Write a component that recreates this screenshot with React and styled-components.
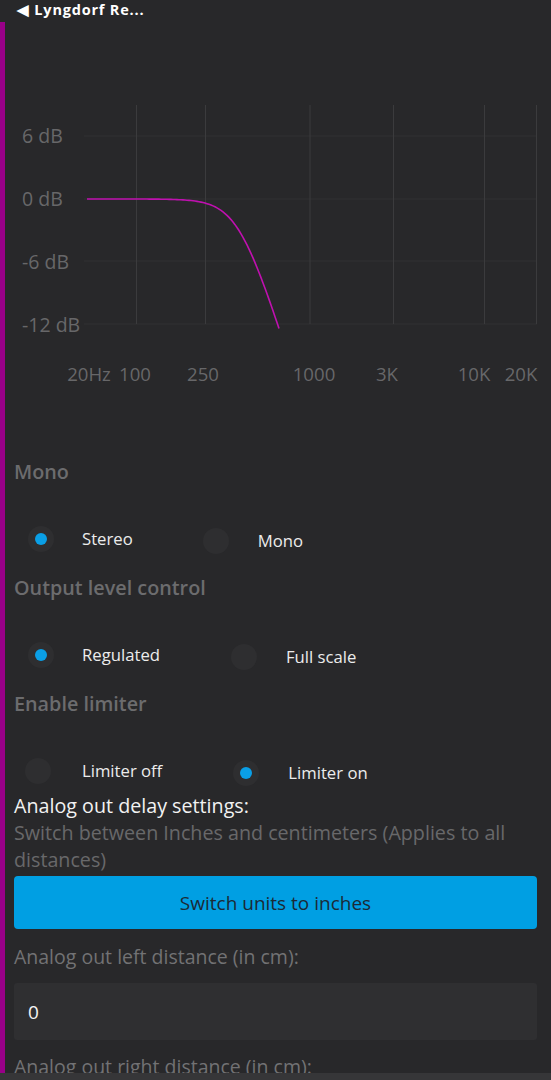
import React from "react";
import styled, { createGlobalStyle } from "styled-components";

const Global = createGlobalStyle`
  html, body { margin: 0; padding: 0; background: #28282a; }
  body { font-family: "Open Sans", "Noto Sans", sans-serif; color: #e6e6e6; overflow: hidden; }
  * { box-sizing: border-box; }
`;

const Page = styled.div`
  width: 551px;
  height: 1080px;
  display: flex;
  flex-direction: column;
  overflow: hidden;
  background: #28282a;
`;

const TopBar = styled.div`
  height: 22px;
  flex: 0 0 22px;
  padding: 0 0 0 17px;
  font-size: 14.5px;
  line-height: 19px;
  letter-spacing: 0.8px;
  font-weight: 700;
  color: #ffffff;
  white-space: nowrap;
`;

const Body = styled.div`
  flex: 1;
  display: flex;
  min-height: 0;
`;

const Accent = styled.div`
  width: 5px;
  flex: 0 0 5px;
  background: #990088;
`;

const Main = styled.div`
  flex: 1;
  display: flex;
  flex-direction: column;
  min-width: 0;
`;

const ChartSvg = styled.svg`
  display: block;
  width: 546px;
  height: 410px;
  flex: 0 0 auto;
`;

const Content = styled.div`
  padding: 0 14px 0 9px;
  display: flex;
  flex-direction: column;
`;

const Heading = styled.div`
  font-size: 19.8px;
  line-height: 27px;
  font-weight: 600;
  color: #6c6c6e;
  margin-top: ${(p) => p.$top || 0}px;
  white-space: nowrap;
`;

const RadioRow = styled.div`
  display: flex;
  align-items: center;
  height: 42px;
  margin-top: 34px;
  padding-left: ${(p) => p.$indent || 14}px;
`;

const RadioItem = styled.label`
  display: flex;
  align-items: center;
  margin-right: ${(p) => p.$gap || 71}px;
  transform: translateY(${(p) => p.$shift || 0}px);
`;

const RadioCircle = styled.span`
  width: 26px;
  height: 26px;
  border-radius: 50%;
  background: #2e2e30;
  display: flex;
  align-items: center;
  justify-content: center;
  margin-right: ${(p) => p.$space || 28}px;
  &::after {
    content: "";
    width: 12px;
    height: 12px;
    border-radius: 50%;
    background: ${(p) => (p.$on ? "#0a9fe6" : "transparent")};
  }
`;

const RadioLabel = styled.span`
  font-size: 16.7px;
  line-height: 22px;
  color: #ececec;
  white-space: nowrap;
`;

const Title = styled.div`
  font-size: 19.7px;
  line-height: 27px;
  color: #f2f2f2;
  margin-top: -1px;
`;

const Desc = styled.div`
  font-size: 19.7px;
  line-height: 27px;
  color: #68686a;
`;

const Button = styled.button`
  margin-top: 3px;
  height: 53px;
  width: 100%;
  border: none;
  border-radius: 4px;
  background: #009fe3;
  color: #1c2a35;
  font-family: "Open Sans", "Noto Sans", sans-serif;
  font-size: 19px;
  font-weight: 500;
  cursor: pointer;
`;

const FieldLabel = styled.div`
  font-size: 19.5px;
  line-height: 27px;
  color: #727274;
  margin-top: ${(p) => p.$top || 0}px;
  white-space: nowrap;
`;

const Input = styled.div`
  margin-top: 13px;
  height: 57px;
  background: #2f2f31;
  border-radius: 3px;
  display: flex;
  align-items: center;
  padding-left: 14px;
  font-size: 19px;
  color: #f4f4f4;
`;

const BottomStrip = styled.div`
  position: fixed;
  left: 0;
  right: 0;
  bottom: 0;
  height: 7px;
  background: #363638;
`;

const yOf = (db) => 199 - db * 10.45;

function curvePath() {
  const pts = [];
  for (let x = 87; x <= 279; x += 2) {
    const f = Math.pow(10, 2 + (x - 136.5) / 173);
    const g = -10 * Math.log10(1 + Math.pow(f / 391, 5.24));
    pts.push(`${x},${yOf(g).toFixed(2)}`);
  }
  return "M" + pts.join(" L");
}

function Chart() {
  const vLines = [136.5, 205.5, 310, 393.5, 484.5, 536.5];
  const hLines = [136, 199, 261, 324];
  const yLabels = [
    ["6 dB", 136],
    ["0 dB", 199],
    ["-6 dB", 262],
    ["-12 dB", 325],
  ];
  const xLabels = [
    ["20Hz", 89],
    ["100", 135],
    ["250", 203],
    ["1000", 314],
    ["3K", 387],
    ["10K", 474],
    ["20K", 521],
  ];
  return (
    <ChartSvg viewBox="5 22 546 410">
      {hLines.map((y) => (
        <line key={y} x1="84" x2="537" y1={y} y2={y} stroke="#313133" strokeWidth="1" />
      ))}
      {vLines.map((x) => (
        <line key={x} x1={x} x2={x} y1="105" y2="324" stroke="#3b3b3d" strokeWidth="1" />
      ))}
      {yLabels.map(([t, y]) => (
        <text key={t} x="22" y={y} dy="7" fontFamily="Open Sans, Noto Sans, sans-serif" fontSize="19.5" fill="#676769">
          {t}
        </text>
      ))}
      {xLabels.map(([t, x]) => (
        <text key={t} x={x} y="374" dy="6.5" textAnchor="middle" fontFamily="Open Sans, Noto Sans, sans-serif" fontSize="18.6" fill="#676769">
          {t}
        </text>
      ))}
      <path d={curvePath()} fill="none" stroke="#c010b0" strokeWidth="1.6" />
    </ChartSvg>
  );
}

function Radio({ on, label, gap, shift, space }) {
  return (
    <RadioItem $gap={gap} $shift={shift}>
      <RadioCircle $on={on} $space={space} />
      <RadioLabel>{label}</RadioLabel>
    </RadioItem>
  );
}

export default function App() {
  return (
    <Page>
      <Global />
      <TopBar>◀ Lyngdorf Re...</TopBar>
      <Body>
        <Accent />
        <Main>
          <Chart />
          <Content>
            <Heading $top={26}>Mono</Heading>
            <RadioRow $indent={14}>
              <Radio on label="Stereo" gap={70} shift={-1} />
              <Radio label="Mono" shift={1} space={29} />
            </RadioRow>
            <Heading $top={13}>Output level control</Heading>
            <RadioRow $indent={14}>
              <Radio on label="Regulated" gap={71} shift={-1} />
              <Radio label="Full scale" shift={1} space={29} />
            </RadioRow>
            <Heading $top={13}>Enable limiter</Heading>
            <RadioRow $indent={11}>
              <Radio label="Limiter off" gap={71} shift={-1} space={31} />
              <Radio on label="Limiter on" shift={1} space={29} />
            </RadioRow>
            <Title>Analog out delay settings:</Title>
            <Desc>Switch between Inches and centimeters (Applies to all distances)</Desc>
            <Button>Switch units to inches</Button>
            <FieldLabel $top={14}>Analog out left distance (in cm):</FieldLabel>
            <Input>0</Input>
            <FieldLabel $top={13}>Analog out right distance (in cm):</FieldLabel>
          </Content>
        </Main>
      </Body>
      <BottomStrip />
    </Page>
  );
}
